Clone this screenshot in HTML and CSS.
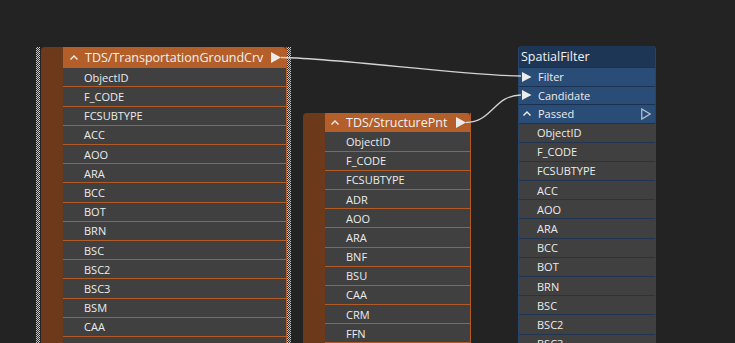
FILE: index.html
```html
<!DOCTYPE html>
<html lang="en">
<head>
    <meta charset="UTF-8">
    <title>Workspace canvas</title>
    <link rel="stylesheet" href="styles.css">
</head>
<body>
    <div class="canvas">

        <!-- reader: TransportationGroundCrv (selected) -->
        <div class="node feature selected node-crv">
            <div class="side"></div>
            <div class="body">
                <div class="head head-tall">
                    <svg class="caret" width="8" height="5" viewBox="0 0 8 5"><polyline points="0.5,4.5 4,1 7.5,4.5" /></svg>
                    <span class="title">TDS/TransportationGroundCrv</span>
                    <svg class="out" width="10" height="11" viewBox="0 0 10 11"><polygon points="0,0 10,5.5 0,11" /></svg>
                </div>
                <div class="row">ObjectID</div>
                <div class="row">F_CODE</div>
                <div class="row">FCSUBTYPE</div>
                <div class="row">ACC</div>
                <div class="row">AOO</div>
                <div class="row">ARA</div>
                <div class="row">BCC</div>
                <div class="row">BOT</div>
                <div class="row">BRN</div>
                <div class="row">BSC</div>
                <div class="row">BSC2</div>
                <div class="row">BSC3</div>
                <div class="row">BSM</div>
                <div class="row">CAA</div>
                <div class="row">CET</div>
            </div>
        </div>

        <!-- reader: StructurePnt -->
        <div class="node feature node-pnt">
            <div class="side"></div>
            <div class="body">
                <div class="head">
                    <svg class="caret" width="8" height="5" viewBox="0 0 8 5"><polyline points="0.5,4.5 4,1 7.5,4.5" /></svg>
                    <span class="title">TDS/StructurePnt</span>
                    <svg class="out" width="10" height="11" viewBox="0 0 10 11"><polygon points="0,0 10,5.5 0,11" /></svg>
                </div>
                <div class="row">ObjectID</div>
                <div class="row">F_CODE</div>
                <div class="row">FCSUBTYPE</div>
                <div class="row">ADR</div>
                <div class="row">AOO</div>
                <div class="row">ARA</div>
                <div class="row">BNF</div>
                <div class="row">BSU</div>
                <div class="row">CAA</div>
                <div class="row">CRM</div>
                <div class="row">FFN</div>
            </div>
        </div>

        <!-- transformer: SpatialFilter -->
        <div class="node transformer node-filter">
            <div class="t-title">SpatialFilter</div>
            <div class="port">
                <svg class="in" width="10" height="10" viewBox="0 0 10 10"><polygon points="0,0 9.5,5 0,10" /></svg>
                <span>Filter</span>
            </div>
            <div class="port">
                <svg class="in" width="10" height="10" viewBox="0 0 10 10"><polygon points="0,0 9.5,5 0,10" /></svg>
                <span>Candidate</span>
            </div>
            <div class="port port-out">
                <svg class="caret" width="8" height="5" viewBox="0 0 8 5"><polyline points="0.5,4.5 4,1 7.5,4.5" /></svg>
                <span>Passed</span>
                <svg class="hollow" width="10" height="12" viewBox="0 0 10 12"><polygon points="0.75,0.9 9.2,6 0.75,11.1" /></svg>
            </div>
            <div class="row">ObjectID</div>
            <div class="row">F_CODE</div>
            <div class="row">FCSUBTYPE</div>
            <div class="row">ACC</div>
            <div class="row">AOO</div>
            <div class="row">ARA</div>
            <div class="row">BCC</div>
            <div class="row">BOT</div>
            <div class="row">BRN</div>
            <div class="row">BSC</div>
            <div class="row">BSC2</div>
            <div class="row">BSC3</div>
        </div>

        <!-- connections -->
        <svg class="wires" width="735" height="343" viewBox="0 0 735 343">
            <path d="M281,57.5 C330,57.5 470,76 521,76" />
            <path d="M466,122.5 C492,122.5 494,95 521,95" />
        </svg>
    </div>
</body>
</html>
```

FILE: styles.css
```css
body {
    margin: 0;
    background: #232323;
    font-family: "Open Sans", "Noto Sans", sans-serif;
    overflow: hidden;
}
.canvas {
    position: relative;
    width: 735px;
    height: 343px;
    overflow: hidden;
}
.node {
    position: absolute;
    height: 420px;
}

/* feature type nodes (orange) */
.feature {
    display: flex;
    background: #6c3a1a;
    border-radius: 4px 4px 0 0;
}
.feature .side {
    width: 22px;
    flex: none;
}
.feature .body {
    flex: 1;
    display: flex;
    flex-direction: column;
    background: #404040;
    border-right: 1px solid #b35b26;
}
.node-crv {
    left: 41px;
    top: 47px;
    width: 246px;
}
.node-pnt {
    left: 303px;
    top: 113px;
    width: 168px;
}
.selected::before,
.selected::after {
    content: "";
    position: absolute;
    top: 0;
    bottom: 0;
    width: 4px;
    background: repeating-conic-gradient(#c8c8c8 0 25%, #2a2a2a 0 50%) 0 0 / 2px 2px;
}
.selected::before {
    left: -5px;
}
.selected::after {
    right: -4px;
}
.head {
    display: flex;
    align-items: center;
    height: 19.4px;
    flex: none;
    padding: 0 4px 0 6px;
    background: #b45e29;
    border-top-right-radius: 4px;
    color: #f2f2f2;
    font-size: 12.5px;
}
.head-tall {
    height: 21.3px;
    padding: 0 5px 0 7px;
}
.head .title {
    flex: 1;
    margin-left: 7px;
    white-space: nowrap;
}
.caret polyline {
    fill: none;
    stroke: #f0f0f0;
    stroke-width: 1.4;
}
.out polygon {
    fill: #ececec;
}
.row {
    height: 18.2px;
    flex: none;
    padding-left: 21px;
    display: flex;
    align-items: center;
    border-bottom: 1px solid #b35b26;
    color: #ececec;
    font-size: 11px;
    white-space: nowrap;
}

/* transformer node (blue) */
.transformer {
    left: 518px;
    top: 46px;
    width: 138px;
    display: flex;
    flex-direction: column;
    background: #404040;
    border-left: 1px solid #27456a;
    border-right: 1px solid #27456a;
    border-radius: 4px 4px 0 0;
    box-sizing: border-box;
}
.t-title {
    height: 21px;
    flex: none;
    padding-left: 2px;
    display: flex;
    align-items: center;
    background: #1d3655;
    border-radius: 4px 4px 0 0;
    color: #f2f2f2;
    font-size: 12.5px;
}
.port {
    height: 17.5px;
    flex: none;
    display: flex;
    align-items: center;
    padding-left: 3px;
    background: #2a4d77;
    border-top: 1px solid #1c3150;
    color: #ececec;
    font-size: 11px;
}
.port span {
    margin-left: 6px;
}
.port-out {
    border-bottom: 1px solid #1c3150;
}
.port-out .caret {
    margin-left: 1px;
    margin-right: 1px;
}
.port-out span {
    flex: 1;
}
.in polygon {
    fill: #ececec;
}
.hollow {
    margin-right: 4px;
}
.hollow polygon {
    fill: none;
    stroke: #b8c4d2;
    stroke-width: 1.2;
}
.transformer .row {
    padding-left: 18px;
    border-bottom-color: #1f3552;
}

.wires {
    position: absolute;
    left: 0;
    top: 0;
    pointer-events: none;
}
.wires path {
    fill: none;
    stroke: #d4d4d4;
    stroke-width: 1.3;
}
```
